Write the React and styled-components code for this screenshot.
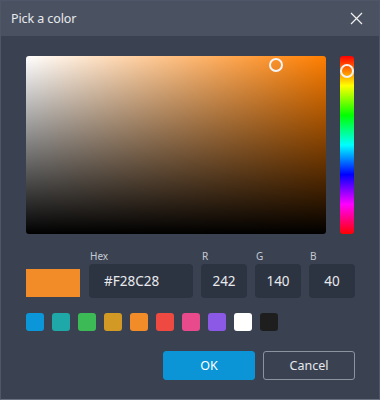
import React from "react";
import styled, { createGlobalStyle } from "styled-components";

const Global = createGlobalStyle`
  html, body { margin: 0; padding: 0; background: #3a4252; }
  * { box-sizing: border-box; }
`;

const Dialog = styled.div`
  width: 380px;
  height: 400px;
  display: flex;
  flex-direction: column;
  background: #3a4252;
  border: 1px solid #4e5667;
  border-bottom-color: #6a7282;
  font-family: "Noto Sans", "Open Sans", sans-serif;
  color: #e6e8ec;
`;

const TitleBar = styled.div`
  height: 35px;
  flex: none;
  display: flex;
  align-items: center;
  justify-content: space-between;
  background: #4a5261;
  padding: 0 16px 0 10px;
`;

const Title = styled.span`
  font-size: 12.5px;
  color: #e8eaee;
  letter-spacing: -0.1px;
`;

const CloseBtn = styled.button`
  all: unset;
  width: 13px;
  height: 13px;
  display: flex;
  align-items: center;
  justify-content: center;
  cursor: pointer;
`;

const Body = styled.div`
  flex: 1;
  display: flex;
  flex-direction: column;
  padding: 20px 24px 0 25px;
`;

const PickerRow = styled.div`
  display: flex;
  gap: 14px;
`;

const SVArea = styled.div`
  position: relative;
  width: 300px;
  height: 178px;
  border-radius: 3px;
  background: linear-gradient(to top, #000, rgba(0, 0, 0, 0)),
    linear-gradient(to right, #fff, ${(p) => p.$hue});
`;

const HueBar = styled.div`
  position: relative;
  width: 14px;
  height: 178px;
  border-radius: 3px;
  background: linear-gradient(
    to bottom,
    #f00 0%,
    #ff0 16.66%,
    #0f0 33.33%,
    #0ff 50%,
    #00f 66.66%,
    #f0f 83.33%,
    #f00 100%
  );
`;

const Marker = styled.div`
  position: absolute;
  width: 14px;
  height: 14px;
  margin: -7px 0 0 -7px;
  border: 2px solid #f4f4f4;
  border-radius: 50%;
`;

const ValuesRow = styled.div`
  display: flex;
  align-items: flex-end;
  gap: 8px;
  margin-top: 16px;
`;

const Preview = styled.div`
  width: 54px;
  height: 28px;
  margin-right: 1px;
  margin-bottom: 1px;
  background: ${(p) => p.$color};
`;

const Field = styled.div`
  display: flex;
  flex-direction: column;
  gap: 2px;
`;

const Label = styled.label`
  font-size: 10px;
  line-height: 12px;
  color: #c6cad2;
  padding-left: 1px;
`;

const Input = styled.input`
  width: ${(p) => p.$w}px;
  height: 34px;
  border: none;
  outline: none;
  border-radius: 4px;
  background: #2c3341;
  color: #e8eaee;
  font-family: "Noto Sans", "Open Sans", sans-serif;
  font-size: 13.5px;
  padding: 0 ${(p) => (p.$center ? "0" : "15px")};
  text-align: ${(p) => (p.$center ? "center" : "left")};
`;

const Swatches = styled.div`
  display: flex;
  gap: 8px;
  margin-top: 15px;
`;

const Swatch = styled.button`
  all: unset;
  width: 18px;
  height: 18px;
  border-radius: 3px;
  background: ${(p) => p.$color};
  cursor: pointer;
`;

const Actions = styled.div`
  display: flex;
  justify-content: flex-end;
  gap: 8px;
  margin-top: 20px;
`;

const Button = styled.button`
  width: ${(p) => p.$w}px;
  height: 29px;
  border-radius: 3px;
  font-family: "Noto Sans", "Open Sans", sans-serif;
  font-size: 12.5px;
  cursor: pointer;
  color: ${(p) => (p.$primary ? "#ffffff" : "#e6e8ec")};
  background: ${(p) => (p.$primary ? "#0b95d6" : "transparent")};
  border: 1px solid ${(p) => (p.$primary ? "#0b95d6" : "#8d939e")};
`;

const colors = [
  "#0b96d9",
  "#1fa8a8",
  "#3bba55",
  "#d29a24",
  "#f28c28",
  "#ef4a42",
  "#e84a8c",
  "#8b59e6",
  "#ffffff",
  "#1e1e1e",
];

export default function App() {
  const r = 242, g = 140, b = 40;
  const max = Math.max(r, g, b), min = Math.min(r, g, b);
  const hue = (60 * (g - b)) / (max - min);
  const s = (max - min) / max;
  const v = max / 255;
  return (
    <>
      <Global />
      <Dialog>
        <TitleBar>
          <Title>Pick a color</Title>
          <CloseBtn aria-label="Close">
            <svg width="13" height="13" viewBox="0 0 13 13">
              <path d="M1 1L12 12M12 1L1 12" stroke="#f0f0f0" strokeWidth="1.2" />
            </svg>
          </CloseBtn>
        </TitleBar>
        <Body>
          <PickerRow>
            <SVArea $hue={`hsl(${hue}, 100%, 50%)`}>
              <Marker style={{ left: `${s * 100}%`, top: `${(1 - v) * 100}%` }} />
            </SVArea>
            <HueBar>
              <Marker style={{ left: "50%", top: `${(hue / 360) * 100}%` }} />
            </HueBar>
          </PickerRow>
          <ValuesRow>
            <Preview $color="#F28C28" />
            <Field>
              <Label>Hex</Label>
              <Input $w={104} defaultValue="#F28C28" />
            </Field>
            <Field>
              <Label>R</Label>
              <Input $w={46} $center defaultValue={r} />
            </Field>
            <Field>
              <Label>G</Label>
              <Input $w={46} $center defaultValue={g} />
            </Field>
            <Field>
              <Label>B</Label>
              <Input $w={46} $center defaultValue={b} />
            </Field>
          </ValuesRow>
          <Swatches>
            {colors.map((c) => (
              <Swatch key={c} $color={c} />
            ))}
          </Swatches>
          <Actions>
            <Button $primary $w={92}>OK</Button>
            <Button $w={92}>Cancel</Button>
          </Actions>
        </Body>
      </Dialog>
    </>
  );
}
